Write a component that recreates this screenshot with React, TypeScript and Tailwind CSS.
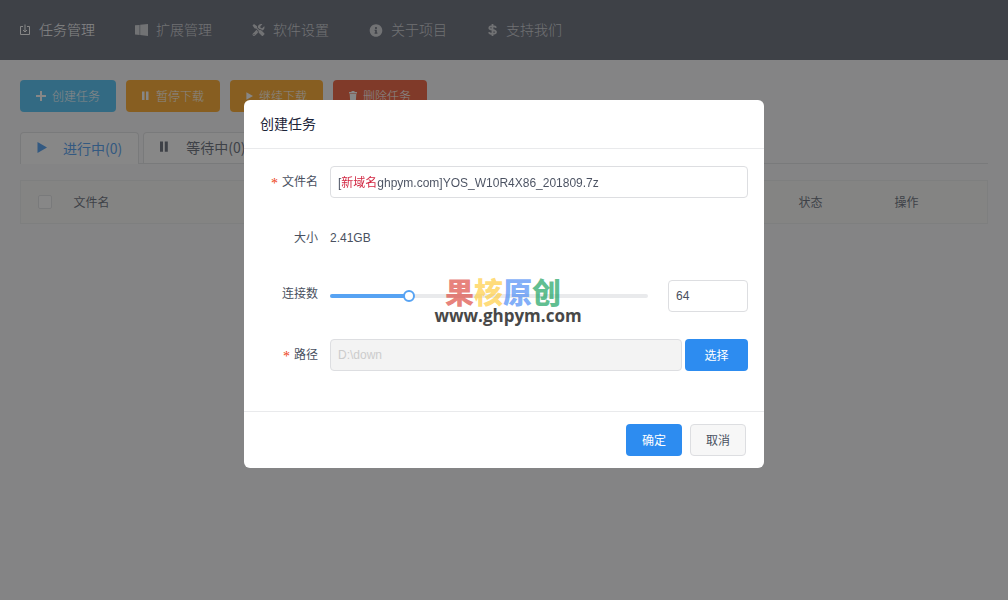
import { useState } from "react";
import type { ReactNode } from "react";
import { FaTools, FaInfoCircle } from "react-icons/fa";

function InboxIcon() {
  return (
    <svg viewBox="0 0 11 12" className="h-3 w-[11px]" fill="none" stroke="currentColor">
      <path d="M3 2.5H.5v8h9v-8H7M5 .5V8M3 6l2 2 2-2" />
    </svg>
  );
}

function WindowsIcon() {
  return (
    <svg viewBox="0 0 13 12" className="h-3 w-[13px]" fill="currentColor">
      <path d="M0 1.2 4.6.9v10.2L0 10.6zM5.2.7 13 0v12l-7.8-1z" />
    </svg>
  );
}

function DollarIcon() {
  return (
    <svg viewBox="0 0 11 12" className="h-3 w-[11px]" fill="none" stroke="currentColor" strokeWidth="1.8">
      <path d="M9 3.7C8.6 2.5 7.400 2.100 5.500 2.100 3.600 2.100 2.300 2.700 2.300 3.900 2.300 6.500 9 5.300 9 8.100 9 9.300 7.500 9.900 5.500 9.900 3.500 9.900 2.300 9.400 1.900 8.200M5.500 0v12" />
    </svg>
  );
}

function TrashIcon() {
  return (
    <svg viewBox="0 0 8 11" className="h-[11px] w-2" fill="currentColor">
      <path d="M0 1h2.500V0h3v1H8v1.500H0zM.7 3h6.600l-.5 8H1.200z" />
    </svg>
  );
}

function PlusIcon() {
  return (
    <svg viewBox="0 0 10 10" className="size-2.5" fill="none" stroke="currentColor" strokeWidth="2">
      <path d="M5 0v10M0 5h10" />
    </svg>
  );
}

function PauseIcon({ className }: { className: string }) {
  return (
    <svg viewBox="0 0 8 10" preserveAspectRatio="xMinYMid meet" className={className} fill="currentColor">
      <path d="M0 .5h2.500v8.500H0zM4 .5h2.500v8.500H4z" />
    </svg>
  );
}

function PlayIcon({ className }: { className: string }) {
  return (
    <svg viewBox="0 0 10 11" className={className} fill="currentColor">
      <path d="M.5 0 10 5.5.5 11z" />
    </svg>
  );
}

const navItems: { label: string; icon: ReactNode; active?: boolean }[] = [
  { label: "任务管理", icon: <InboxIcon />, active: true },
  { label: "扩展管理", icon: <WindowsIcon /> },
  { label: "软件设置", icon: <FaTools className="h-3 w-[13px]" /> },
  { label: "关于项目", icon: <FaInfoCircle className="h-[13px] w-3.5" /> },
  { label: "支持我们", icon: <DollarIcon /> },
];

const actions: { label: string; icon: ReactNode; color: string }[] = [
  { label: "创建任务", icon: <PlusIcon />, color: "bg-[#2db7f5]" },
  { label: "暂停下载", icon: <PauseIcon className="h-2.5 w-2" />, color: "bg-[#ff9900]" },
  { label: "继续下载", icon: <PlayIcon className="h-2 w-[7px]" />, color: "bg-[#ff9900]" },
  { label: "删除任务", icon: <TrashIcon />, color: "bg-[#ed3f14]" },
];

const MIN = 1;
const MAX = 256;

function Row({ label, id, required, children }: { label: string; id: string; required?: boolean; children: ReactNode }) {
  return (
    <div className="mb-6 flex">
      <label htmlFor={id} className="flex h-8 w-[70px] shrink-0 items-center justify-end gap-1 pr-3">
        {required && <span className="pt-1 font-['Liberation_Serif',serif] text-sm text-[#ed3f14]">*</span>}
        {label}
      </label>
      <div className="min-w-0 flex-1">{children}</div>
    </div>
  );
}

function CreateTaskDialog() {
  const [name, setName] = useState("[新域名ghpym.com]YOS_W10R4X86_201809.7z");
  const [connections, setConnections] = useState(64);
  const percent = ((connections - MIN) / (MAX - MIN)) * 100;

  return (
    <div role="dialog" aria-modal="true" aria-labelledby="dialog-title" className="relative w-full max-w-[520px] rounded-md bg-white font-normal">
      <header className="flex h-[49px] items-center border-b border-[#e9eaec] px-4">
        <h2 id="dialog-title" className="text-sm font-normal text-[#1c2438]">创建任务</h2>
      </header>
      <form id="task-form" className="px-4 pt-[17px] pb-4" onSubmit={(e) => e.preventDefault()}>
        <Row label="文件名" id="file-name" required>
          <div className="rounded border border-[#dddee1]">
            <input
              id="file-name"
              value={name}
              onChange={(e) => setName(e.target.value)}
              className="block h-[30px] w-full bg-[linear-gradient(90deg,#495060_10px,#d0203c_10px,#d0203c_46px,#495060_46px)] bg-clip-text px-[7px] pb-0.5 text-transparent caret-[#495060] outline-none"
            />
          </div>
        </Row>
        <Row label="大小" id="file-size">
          <output id="file-size" className="flex h-8 items-center">2.41GB</output>
        </Row>
        <Row label="连接数" id="connections">
          <div className="flex items-center gap-5 pt-0.5 pb-[3px]">
            <div className="grid flex-1 items-center">
              <div className="h-1 rounded-full bg-[#e9eaec] [grid-area:1/1]">
                <div className="h-1 rounded-full bg-[#57a3f3]" style={{ width: `${percent}%` }} />
              </div>
              <input
                id="connections"
                type="range"
                min={MIN}
                max={MAX}
                value={connections}
                onChange={(e) => setConnections(Number(e.target.value))}
                className="-mx-1.5 h-3 cursor-pointer appearance-none bg-transparent [grid-area:1/1] [&::-webkit-slider-thumb]:size-3 [&::-webkit-slider-thumb]:appearance-none [&::-webkit-slider-thumb]:rounded-full [&::-webkit-slider-thumb]:border-2 [&::-webkit-slider-thumb]:border-[#57a3f3] [&::-webkit-slider-thumb]:bg-white"
              />
            </div>
            <input
              aria-label="连接数"
              inputMode="numeric"
              value={connections}
              onChange={(e) => setConnections(Math.min(MAX, Math.max(MIN, Number(e.target.value) || MIN)))}
              className="h-8 w-20 rounded border border-[#dddee1] bg-white px-[7px] outline-none"
            />
          </div>
        </Row>
        <Row label="路径" id="path" required>
          <div className="flex gap-[3px]">
            <input id="path" disabled value="D:\down" className="h-8 min-w-0 flex-1 rounded border border-[#dddee1] bg-[#f3f3f3] px-[7px] text-[#cccccc]" />
            <button type="button" className="h-8 w-[63px] rounded bg-[#2d8cf0] pt-0.5 text-white">选择</button>
          </div>
        </Row>
      </form>
      <footer className="flex justify-end gap-2 border-t border-[#e9eaec] py-3 pr-[18px] pl-4">
        <button type="submit" form="task-form" className="h-8 w-14 rounded bg-[#2d8cf0] pt-0.5 text-white">确定</button>
        <button type="button" className="h-8 w-14 rounded border border-[#dddee1] bg-[#f7f7f7] pt-0.5">取消</button>
      </footer>
      <div className="pointer-events-none absolute top-[177px] left-[189px] w-[150px]">
        <p className="flex pl-3 font-['Noto_Sans_CJK_SC',sans-serif] text-[29px] leading-[29px] font-black">
          <span className="text-[#dd4b42]/70">果</span>
          <span className="text-[#ffcd41]/70">核</span>
          <span className="text-[#4c8bf5]/70">原</span>
          <span className="text-[#1aa260]/70">创</span>
        </p>
        <p className="text-center font-['Open_Sans','Noto_Sans',sans-serif] text-[17px] leading-5 font-bold text-[#484848]">www.ghpym.com</p>
      </div>
    </div>
  );
}

export default function App() {
  return (
    <div className="min-h-screen bg-[#f8f8f9] font-['Liberation_Sans','Noto_Sans_CJK_SC',sans-serif] text-xs font-light text-[#495060]">
      <nav className="flex h-[60px] items-center gap-10 bg-[#495060] px-5 text-sm">
        {navItems.map((item) => (
          <a key={item.label} href="#" className={item.active ? "flex items-center gap-2 text-white" : "flex items-center gap-2 text-white/70"}>
            {item.icon}
            {item.label}
          </a>
        ))}
      </nav>

      <main className="px-5 pt-5">
        <div className="flex gap-2.5">
          {actions.map((action) => (
            <button key={action.label} type="button" className={`flex h-8 items-center gap-1.5 rounded px-4 text-white ${action.color}`}>
              {action.icon}
              <span className="pt-0.5">{action.label}</span>
            </button>
          ))}
        </div>

        <div role="tablist" className="mt-5 flex h-8 gap-1 border-b border-[#dddee1] font-['Noto_Sans_CJK_SC',sans-serif] text-sm font-normal">
          <button role="tab" aria-selected="true" type="button" className="-mb-px flex items-center gap-4 rounded-t border border-b-0 border-[#dddee1] bg-white px-4 pb-0.5 text-[#2d8cf0]">
            <PlayIcon className="h-[11px] w-2.5" />
            进行中(0)
          </button>
          <button role="tab" aria-selected="false" type="button" className="flex items-center gap-4 rounded-t border border-b-0 border-[#dddee1] bg-white px-4 pb-0.5">
            <PauseIcon className="h-3 w-2.5" />
            等待中(0)
          </button>
        </div>

        <table className="mt-4 w-full table-fixed border-collapse border border-[#e9eaec] bg-[#f8f8f6] text-left">
          <thead>
            <tr className="h-[43px]">
              <th className="w-[53px] pl-[17px]">
                <input type="checkbox" aria-label="全选" className="block size-3.5 appearance-none rounded-xs border border-[#dddee1] bg-white" />
              </th>
              <th className="pt-0.5 font-normal">文件名</th>
              <th className="w-24 pt-0.5 font-normal">状态</th>
              <th className="w-[93px] pt-0.5 font-normal">操作</th>
            </tr>
          </thead>
        </table>
      </main>

      <div className="fixed inset-0 flex items-start justify-center overflow-auto bg-[#373737]/60 pt-[100px]">
        <CreateTaskDialog />
      </div>
    </div>
  );
}
